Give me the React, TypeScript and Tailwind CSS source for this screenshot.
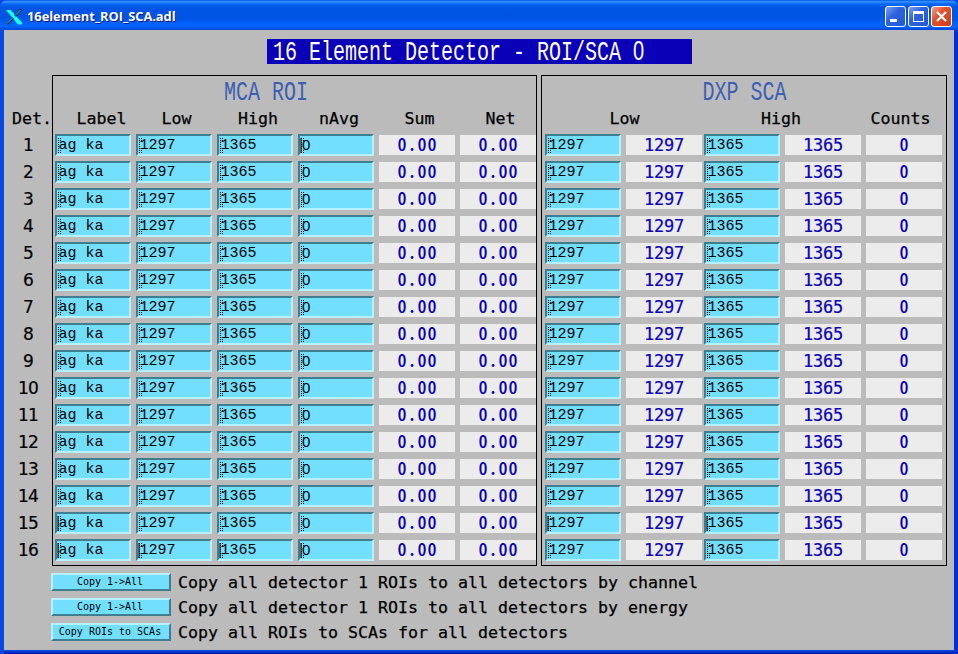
import React from "react";

const MONO = "font-['DejaVu_Sans_Mono',monospace]";
const HALF = "font-['Noto_Sans_CJK_JP',monospace] [font-feature-settings:'hwid']";
const THIN = "font-['Liberation_Mono',monospace]";
const LABEL = `${MONO} text-[16.62px] leading-[20px] [-webkit-text-stroke:0.25px]`;

const rows = Array.from({ length: 16 }, (_, i) => i + 1);

function Cursor({ solid }: { solid: boolean }) {
  return (
    <svg className="absolute left-0 top-[2px]" width="5" height="15" shapeRendering="crispEdges">
      {solid && <rect width="2" height="15" fill="#35707f" />}
      <path d="M1.5 0V15" stroke="#000" strokeDasharray="1 1" />
      <path d="M3.5 0V3M3.5 12V15" stroke="#000" strokeDasharray="1 1" />
    </svg>
  );
}

function Entry({ value, solid = false }: { value: string; solid?: boolean }) {
  return (
    <div className="relative h-[22px] w-[76px] shrink-0 border-2 border-b-[#b9f0ff] border-l-[#3f7e90] border-r-[#b9f0ff] border-t-[#3f7e90] bg-[#73dfff]">
      {value === "0" ? (
        <span className="ml-[2px] block font-['Liberation_Sans',sans-serif] text-[15px] leading-[18px] text-black">0</span>
      ) : (
        <span className={`${THIN} ml-[1.5px] block whitespace-pre pt-px text-[15px] leading-[18px] text-black`}>{value}</span>
      )}
      <Cursor solid={solid} />
    </div>
  );
}

function Readout({ value }: { value: string }) {
  const plain = value.startsWith("1");
  return (
    <div className="h-5 w-[76px] shrink-0 bg-[#ececec] text-center text-[#0a00b8]">
      {plain ? (
        <span className={`${MONO} block text-[17px] leading-[20px] tracking-[-0.2px] [-webkit-text-stroke:0.2px]`}>{value}</span>
      ) : (
        <span className={`${HALF} -mt-[2px] block pl-px text-[18px] font-medium leading-[20px] tracking-[1px]`}>{value}</span>
      )}
    </div>
  );
}

function Head({ children, w }: { children: string; w: string }) {
  return <div className={`${w} ${LABEL} shrink-0 text-center`}>{children}</div>;
}

function Display({ children }: { children: React.ReactNode }) {
  return (
    <span className={`${THIN} inline-block origin-center scale-y-[1.42] whitespace-pre text-[20px] leading-[24px]`}>
      {children}
    </span>
  );
}

function Action({ button, text }: { button: string; text: string }) {
  return (
    <div className="flex h-[25px] items-start">
      <button className={`${MONO} flex h-[18px] w-[120px] shrink-0 items-center justify-center border-2 border-b-[#3f7e90] border-l-[#b9f0ff] border-r-[#3f7e90] border-t-[#b9f0ff] bg-[#73dfff] pr-[2px] text-[10px] leading-none`}>
        {button}
      </button>
      <span className={`${LABEL} ml-[7px] whitespace-pre`}>{text}</span>
    </div>
  );
}

export default function App() {
  return (
    <div className="flex h-[654px] w-[958px] flex-col bg-[linear-gradient(#0848e0_0,#0848e0_651px,#0030d0_652px,#0010a0_654px)]">
      <header className="flex h-[30px] shrink-0 items-center rounded-t-[7px] bg-[linear-gradient(#0058e6_0%,#3a93ff_6%,#0a6cf5_12%,#0055e5_25%,#0054e3_60%,#0264fe_80%,#0264fe_90%,#0043cf_100%)] pl-[6px] pr-[6px] pt-[3px]">
        <svg width="16" height="16" viewBox="0 0 16 16">
          <path d="M0 1H4.5L16 13.5V15.5H12Z" fill="#1ff" />
          <path d="M15 0.5L9 7M7 9L1 15" stroke="#06203c" strokeWidth="2.4" />
          <path d="M14.5 1L9 6.5M6.5 9L1 14.5" stroke="#3ff" strokeWidth="0.9" />
        </svg>
        <span className="ml-[5px] font-['Open_Sans',sans-serif] text-[12.9px] font-bold tracking-[-0.05px] text-white [text-shadow:1px_1px_#0a1883]">16element_ROI_SCA.adl</span>
        <div className="ml-auto flex gap-[2px]">
          <div className="flex h-[21px] w-[21px] rounded-[3px] border border-white bg-[linear-gradient(135deg,#7ea2f0,#2f62dc_40%,#2258d8)]">
            <span className="ml-1 mt-[12px] h-[3px] w-[7px] bg-white" />
          </div>
          <div className="flex h-[21px] w-[21px] rounded-[3px] border border-white bg-[linear-gradient(135deg,#7ea2f0,#2f62dc_40%,#2258d8)]">
            <span className="ml-1 mt-1 h-[11px] w-[11px] border border-t-[3px] border-white" />
          </div>
          <div className="flex h-[21px] w-[21px] items-center justify-center rounded-[3px] border border-white bg-[linear-gradient(135deg,#f0a08a,#e0512c_40%,#cc3c16)]">
            <svg width="11" height="11"><path d="M1 1L10 10M10 1L1 10" stroke="#fff" strokeWidth="2.2" /></svg>
          </div>
        </div>
      </header>
      <div className="flex-1 border-x-4 border-l-[#0848e0] border-r-[#0030d0]">
        <main className="h-[620px] bg-[#bbbbbb] pt-[9px] text-black">
          <div className="ml-[263px] flex h-[25px] w-[425px] bg-[#0a00b8] pl-[6px] text-white">
            <div className="-mt-px"><Display>16 Element Detector - ROI/SCA <span className="font-['Liberation_Sans',sans-serif]">0</span></Display></div>
          </div>
          <div className="mt-[11px] flex">
            <div className="w-12 shrink-0 pt-[34px]">
              <div className={`${LABEL} ml-[8px] h-[26px]`}>Det.</div>
              {rows.map((n) => (
                <div key={n} className="h-[27px] text-center font-['DejaVu_Sans',sans-serif] text-[17px] leading-[20px] tracking-[-0.8px] [-webkit-text-stroke:0.2px]">{n}</div>
              ))}
            </div>
            <section className="h-[491px] w-[485px] border border-black">
              <div className="flex h-[33px] justify-center pr-[57px] pt-[6px] text-[#3c5fb4]"><Display>MCA ROI</Display></div>
              <div className="flex h-[25px] pl-[8px]">
                <Head w="w-[81px]">Label</Head>
                <Head w="w-[69px]">Low</Head>
                <Head w="w-[94px]">High</Head>
                <Head w="w-[68px]">nAvg</Head>
                <Head w="w-[93px]">Sum</Head>
                <Head w="w-[69px]">Net</Head>
              </div>
              {rows.map((n) => (
                <div key={n} className="flex h-[27px] items-center gap-[5px] pb-[5px] pl-[2px]">
                  <Entry value="ag ka" solid={n >= 15} />
                  <Entry value="1297" solid={n === 16} />
                  <Entry value="1365" solid={n === 16} />
                  <Entry value="0" solid={n === 1 || n === 16} />
                  <Readout value="0.00" />
                  <Readout value="0.00" />
                </div>
              ))}
            </section>
            <section className="ml-1 h-[491px] w-[406px] border border-black">
              <div className="flex h-[33px] justify-center pl-px pt-[6px] text-[#3c5fb4]"><Display>DXP SCA</Display></div>
              <div className="flex h-[25px]">
                <Head w="w-[165px]">Low</Head>
                <Head w="w-[148px]">High</Head>
                <Head w="w-[91px]">Counts</Head>
              </div>
              {rows.map((n) => (
                <div key={n} className="flex h-[27px] items-center pb-[5px] pl-[3px]">
                  <Entry value="1297" solid={n === 15} />
                  <div className="ml-[5px] mr-[2px]"><Readout value="1297" /></div>
                  <Entry value="1365" solid={n === 15} />
                  <div className="mx-[5px]"><Readout value="1365" /></div>
                  <Readout value="0" />
                </div>
              ))}
            </section>
          </div>
          <div className="ml-[47px] mt-[6px]">
            <Action button="Copy 1->All" text="Copy all detector 1 ROIs to all detectors by channel" />
            <Action button="Copy 1->All" text="Copy all detector 1 ROIs to all detectors by energy" />
            <Action button="Copy ROIs to SCAs" text="Copy all ROIs to SCAs for all detectors" />
          </div>
        </main>
      </div>
    </div>
  );
}
